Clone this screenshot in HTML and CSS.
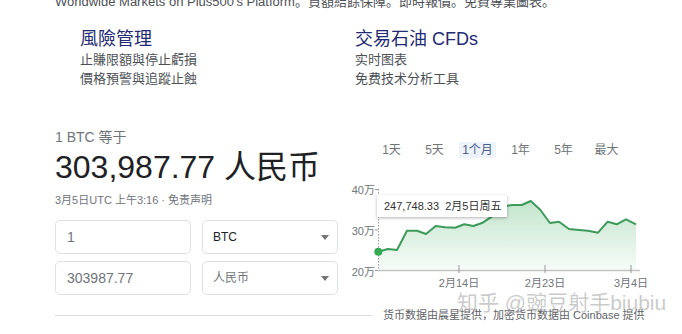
FILE: index.html
```html
<!DOCTYPE html>
<html lang="zh">
<head>
    <meta charset="UTF-8">
    <meta name="viewport" content="width=device-width, initial-scale=1.0">
    <title>BTC 人民币</title>
    <link rel="stylesheet" href="styles.css">
</head>
<body>
<div class="page">

    <!-- ad block with sitelinks -->
    <div class="ad">
        <p class="ad-text">Worldwide Markets on Plus500's Platform。負額結餘保障。即時報價。免費專業圖表。</p>
        <div class="sitelinks">
            <div class="sitelink">
                <a class="sitelink-title" href="#">風險管理</a>
                <p>止賺限額與停止虧損</p>
                <p>價格預警與追蹤止蝕</p>
            </div>
            <div class="sitelink">
                <a class="sitelink-title" href="#">交易石油 CFDs</a>
                <p>实时图表</p>
                <p>免费技术分析工具</p>
            </div>
        </div>
    </div>

    <!-- currency converter -->
    <div class="converter">
        <div class="conv-left">
            <div class="conv-label">1 BTC 等于</div>
            <div class="conv-amount">303,987.77 人民币</div>
            <div class="conv-stamp">3月5日UTC 上午3:16 · 免责声明</div>
            <div class="conv-fields">
                <div class="field">1</div>
                <div class="field select">BTC<span class="caret"></span></div>
                <div class="field">303987.77</div>
                <div class="field select muted">人民币<span class="caret"></span></div>
            </div>
        </div>

        <div class="conv-right">
            <div class="ranges">
                <div class="range"><span>1天</span></div>
                <div class="range"><span>5天</span></div>
                <div class="range"><span class="active">1个月</span></div>
                <div class="range"><span>1年</span></div>
                <div class="range"><span>5年</span></div>
                <div class="range"><span>最大</span></div>
            </div>

            <div class="chart">
                <svg width="320" height="110" viewBox="0 0 320 110">
                    <defs>
                        <linearGradient id="area" x1="0" y1="0" x2="0" y2="1">
                            <stop offset="0" stop-color="#34a853" stop-opacity="0.3"/>
                            <stop offset="1" stop-color="#34a853" stop-opacity="0.04"/>
                        </linearGradient>
                    </defs>
                    <polygon fill="url(#area)" points="33.3,71.7 43,69 52,70 62,50.7 72,50.7 81,54 90.7,46 100,47.3 110,47.7 119.3,44.3 128.3,46 137.7,42.7 146.7,36.7 158,26.7 166.7,25 176.7,25 185.7,21 195,29.5 205,43 214,41.7 224,49 234,50 243,50.7 253,52.7 262.7,41.7 271.7,44.3 281,39.3 291,44.3 291,90 33.3,90"/>
                    <polyline fill="none" stroke="#3d9a5b" stroke-width="2" stroke-linejoin="round" points="33.3,71.7 43,69 52,70 62,50.7 72,50.7 81,54 90.7,46 100,47.3 110,47.7 119.3,44.3 128.3,46 137.7,42.7 146.7,36.7 158,26.7 166.7,25 176.7,25 185.7,21 195,29.5 205,43 214,41.7 224,49 234,50 243,50.7 253,52.7 262.7,41.7 271.7,44.3 281,39.3 291,44.3"/>

                    <line x1="33.5" y1="9" x2="33.5" y2="90" stroke="#999" stroke-width="1" stroke-dasharray="1.5 1.5"/>
                    <line x1="33" y1="90.5" x2="295" y2="90.5" stroke="#c2c2c2" stroke-width="1.5"/>

                    <g stroke="#999" stroke-width="1">
                        <line x1="30" y1="9.5" x2="33" y2="9.5"/>
                        <line x1="30" y1="50" x2="33" y2="50"/>
                        <line x1="30" y1="90.5" x2="33" y2="90.5"/>
                        <line x1="114" y1="85" x2="114" y2="93"/>
                        <line x1="200" y1="85" x2="200" y2="93"/>
                        <line x1="286" y1="85" x2="286" y2="93"/>
                    </g>

                    <circle cx="33.3" cy="71.7" r="4" fill="#34a853"/>

                    <g class="axis-text" text-anchor="end">
                        <text x="30" y="14">40万</text>
                        <text x="30" y="55">30万</text>
                        <text x="30" y="95.5">20万</text>
                    </g>
                    <g class="axis-text" text-anchor="middle">
                        <text x="114" y="107">2月14日</text>
                        <text x="200" y="107">2月23日</text>
                        <text x="286" y="107">3月4日</text>
                    </g>
                </svg>
                <div class="tooltip">247,748.33 &nbsp;2月5日周五</div>
            </div>
        </div>
    </div>

    <div class="conv-foot">
        <span class="rule"></span>
        <span class="source">货币数据由晨星提供，加密货币数据由 Coinbase 提供</span>
    </div>

    <div class="watermark">知乎 @豌豆射手biubiu</div>
</div>
</body>
</html>
```
FILE: styles.css
```css
body {
    margin: 0;
    background-color: #fff;
    font-family: "Liberation Sans", Arial, "Noto Sans CJK SC", sans-serif;
    color: #202124;
}

.page {
    position: relative;
    width: 682px;
    height: 334px;
    overflow: hidden;
}

/* ad */
.ad {
    padding-left: 55px;
    font-family: "Liberation Sans", Arial, "Noto Sans CJK TC", sans-serif;
}

.ad-text {
    margin: -6px 0 0;
    font-size: 13px;
    line-height: 16px;
    color: #4d5156;
    white-space: nowrap;
}

.sitelinks {
    display: grid;
    grid-template-columns: 275px auto;
    padding-left: 25px;
    margin-top: 19px;
}

.sitelink-title {
    display: block;
    font-size: 18px;
    line-height: 21px;
    color: #232a74;
    text-decoration: none;
}

.sitelink p {
    margin: 0;
    font-size: 13px;
    line-height: 19px;
    color: #4d5156;
}

/* converter */
.converter {
    display: flex;
    margin-top: 32px;
}

.conv-left {
    flex: 0 0 345px;
    padding-left: 55px;
    padding-top: 9px;
    box-sizing: border-box;
}

.conv-label {
    font-size: 14px;
    line-height: 16px;
    color: #70757a;
}

.conv-amount {
    margin-top: 4px;
    font-size: 32px;
    line-height: 36px;
    color: #202124;
    white-space: nowrap;
}

.conv-stamp {
    margin-top: 8px;
    font-size: 11px;
    line-height: 14px;
    color: #70757a;
    white-space: nowrap;
}

.conv-fields {
    display: grid;
    grid-template-columns: 136px 136px;
    grid-auto-rows: 34px;
    column-gap: 11px;
    row-gap: 7px;
    margin-top: 13px;
}

.field {
    border: 1px solid #dfe1e5;
    border-radius: 5px;
    padding-left: 11px;
    font-size: 14px;
    line-height: 32px;
    color: #70757a;
}

.select {
    display: flex;
    justify-content: space-between;
    align-items: center;
    padding: 0 8px 0 10px;
    font-size: 12px;
    color: #202124;
}

.select.muted {
    color: #70757a;
}

.caret {
    width: 0;
    height: 0;
    border-left: 4px solid transparent;
    border-right: 4px solid transparent;
    border-top: 5px solid #757575;
}

.conv-right {
    padding-top: 22px;
}

.ranges {
    display: grid;
    grid-template-columns: repeat(6, 43px);
    margin-left: 25px;
}

.range {
    text-align: center;
    font-size: 12px;
    line-height: 16px;
    color: #70757a;
}

.range span {
    display: inline-block;
    padding: 0 3px;
    border-radius: 2px;
}

.range .active {
    background-color: #edf2fb;
    color: #4a5f8a;
}

.chart {
    position: relative;
    width: 320px;
    height: 110px;
    margin-top: 22px;
}

.chart svg {
    display: block;
}

.axis-text {
    font-size: 11px;
    fill: #70757a;
}

.tooltip {
    position: absolute;
    left: 32px;
    top: 15px;
    width: 123px;
    height: 22px;
    padding-left: 7px;
    background-color: #fff;
    box-shadow: 0 1px 3px rgba(0, 0, 0, 0.3);
    font-size: 11px;
    line-height: 22px;
    color: #333;
    white-space: nowrap;
}

.conv-foot {
    display: flex;
    align-items: center;
    margin-top: 13px;
    height: 14px;
}

.rule {
    width: 317px;
    height: 1px;
    margin-left: 55px;
    background-color: #dadce0;
}

.source {
    margin-left: 11px;
    font-size: 11px;
    line-height: 14px;
    color: #5f6368;
    white-space: nowrap;
}

.watermark {
    position: absolute;
    left: 457px;
    top: 291px;
    font-size: 21px;
    line-height: 24px;
    color: rgba(150, 150, 150, 0.5);
    white-space: nowrap;
}
```
